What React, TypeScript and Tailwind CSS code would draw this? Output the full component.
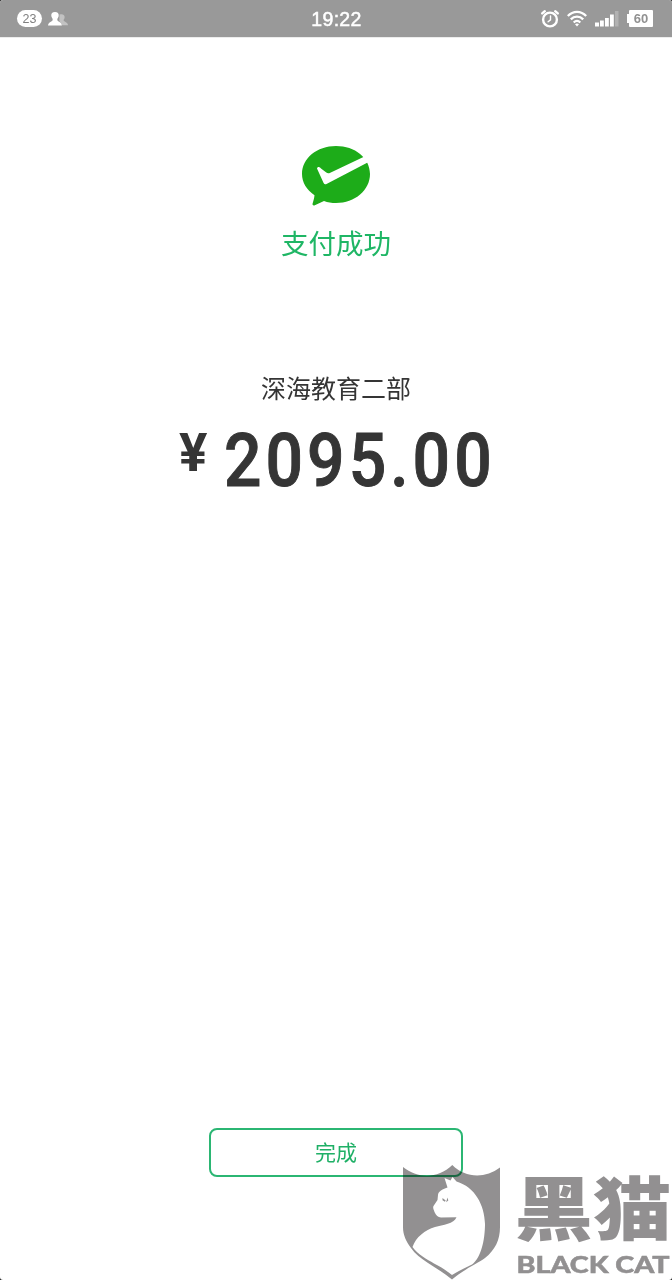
function AlarmIcon() {
  return (
    <svg width="20" height="20" viewBox="0 0 20 20" fill="none" stroke="white" strokeLinecap="round">
      <circle cx="10" cy="10.500" r="6.900" strokeWidth="2.400" />
      <path d="M10.500 7v3.800l-2.400 2" strokeWidth="1.400" />
      <path d="M2.200 4.400 4.800 2.200M17.800 4.400 15.200 2.200" strokeWidth="2.400" />
    </svg>
  );
}

function WifiIcon() {
  return (
    <svg width="20" height="17" viewBox="0 0 20 17" fill="none" stroke="white" strokeWidth="2.300">
      <path d="M.8 6C6 .4 14 .4 19.200 6" />
      <path d="M3.800 9.400c3.500-3.700 8.900-3.700 12.400 0" />
      <path d="M6.700 12.500c2-2 4.600-2 6.600 0" />
      <path d="M8 14.300c1.200-1 2.800-1 4 0l-2 2.200z" fill="white" stroke="none" />
    </svg>
  );
}

function SignalIcon() {
  return (
    <svg width="24" height="16" viewBox="0 0 24 16" fill="white">
      <rect x="0" y="11.500" width="4" height="4" />
      <rect x="5" y="9.500" width="3.800" height="6" />
      <rect x="10" y="7" width="3.800" height="8.500" />
      <rect x="15" y="3.500" width="3.800" height="12" />
      <rect x="20" y="0" width="3.500" height="15.500" opacity=".25" />
    </svg>
  );
}

function ContactsIcon() {
  return (
    <svg width="21" height="14" viewBox="0 0 21 14" fill="white">
      <path
        opacity=".4"
        d="M11.500 2.600c2.900-1.300 5.600.2 5.100 3.100-.3 1.400-1.200 1.800-.9 2.800.4 1.300 4 1.500 4.400 4.700h-6.200c-.5-2.400-2.600-3.200-2.600-4.700z"
      />
      <path d="M7 0c2.700 0 4 1.600 3.700 4-.2 1.700-1.500 2.300-1.400 3.800.1 2 4.200 2 4.600 5.600H0C.4 9.800 4.600 9.800 4.700 7.800 4.800 6.300 3.500 5.700 3.300 4 3 1.600 4.300 0 7 0z" />
    </svg>
  );
}

function StatusBar() {
  return (
    <header className="grid h-[38px] shrink-0 grid-cols-3 items-center border-b border-[#ececec] bg-[#999] pl-[17px] pr-[19px] text-white">
      <div className="flex items-center gap-[6px]">
        <span className="flex h-[17px] w-[25px] items-center justify-center rounded-full bg-white pt-px text-[12.500px] leading-none text-[#808080]">
          23
        </span>
        <ContactsIcon />
      </div>
      <span className="pl-[3px] pt-[3px] text-center text-[19.500px] leading-none tracking-[0.300px] [-webkit-text-stroke:0.500px_white]">
        19:22
      </span>
      <div className="flex items-center justify-end">
        <AlarmIcon />
        <span className="ml-[7px]"><WifiIcon /></span>
        <span className="ml-[8px]"><SignalIcon /></span>
        <div className="ml-[8px] flex items-center">
          <span className="h-[9px] w-[2px] bg-white" />
          <span className="flex h-[17px] w-[24px] items-center justify-center rounded-[1px] bg-white text-[13px] font-bold leading-none text-[#919191]">
            60
          </span>
        </div>
      </div>
    </header>
  );
}

function PayLogo() {
  return (
    <svg width="70" height="62" viewBox="0 0 70 62">
      <path
        fill="#1dac19"
        d="M35 1C16 1 1 13.200 1 29c0 8.500 4.500 15.500 12.500 21.200-.3 3-1.100 5.800-1.900 8.300-.4 1.500.8 2.400 2.200 1.700l9.200-4.300c3.800 1.500 7.500 2.100 12 2.100 19 0 34-12.900 34-29S54 1 35 1z"
      />
      <path
        fill="white"
        d="M16 23.400c.8-2.100 2.300-1.900 4 0l5.300 4.200c1.400 1 2.300 1 4 .1L64 11.200 69.500 16 25.500 38.900c-1.300.6-2.300.2-2.900-1z"
      />
    </svg>
  );
}

function Watermark() {
  return (
    <div className="pointer-events-none absolute bottom-0 right-0 mix-blend-multiply">
      <svg className="overflow-visible" width="272" height="118" viewBox="400 1162 272 118" fill="#929091">
        <path
          fillRule="evenodd"
          d="M403 1167C418 1179 438 1179 452.300 1165 465 1178 485 1179 500 1167.500V1227C500 1240 495 1250 485 1258 478 1263 463 1270 452 1279.500 444 1273 436 1268 428 1263 421 1258 415 1254 411 1248 406 1241 403 1235 403 1227z
             M444.500 1178 447.500 1187.500C442 1189 438 1192 438 1195L437.500 1200 433.500 1206C432.500 1208 434 1209.500 434.500 1212 436 1215 438 1217.500 441 1217.500L456.500 1217.300C454 1224 443 1225 435 1227 425 1230 416 1237 412.500 1247 418 1255 427 1259 434 1263.500 441 1267 447 1271 452 1275 458 1271 465 1268 472 1264.500 481 1258 485 1240 485 1224 484.500 1205 475 1187 456.500 1181.500L452.500 1177 450.500 1180.500z"
        />
        <path d="m442.500 1198 3.200 2.500-.8 1.200-2.400-1.500zM447.500 1197.500l.8 3-2.200 1.700z" />
        <text
          x="514.500"
          y="1234.500"
          fontFamily="'Noto Sans CJK SC', sans-serif"
          fontSize="69"
          fontWeight="900"
          textLength="157"
          lengthAdjust="spacingAndGlyphs"
        >
          黑猫
        </text>
        <text
          x="516.500"
          y="1272.500"
          fontFamily="Lato, sans-serif"
          fontSize="23"
          fontWeight="900"
          textLength="153"
          lengthAdjust="spacingAndGlyphs"
          stroke="#929091"
          strokeWidth=".5"
        >
          BLACK CAT
        </text>
      </svg>
    </div>
  );
}

export default function App() {
  return (
    <div className="h-[1280px] w-[672px] bg-[#222] font-['Liberation_Sans','Noto_Sans_CJK_SC',sans-serif]">
      <div className="relative flex h-full flex-col overflow-hidden rounded-[3px] bg-white">
        <StatusBar />
        <main className="flex flex-1 flex-col items-center">
          <div className="mt-[107px]">
            <PayLogo />
          </div>
          <h1 className="mt-[18px] text-[27.500px] leading-[40px] text-[#1fb665]">支付成功</h1>
          <p className="mt-[106px] text-[25px] leading-[36px] text-[#353535]">深海教育二部</p>
          <p className="mt-[9px] flex w-[314px] items-start font-['Roboto','Liberation_Sans',sans-serif] text-[#353535]">
            <span className="mt-[10px] w-[45px] text-[53px] font-bold leading-[54px]">¥</span>
            <span className="w-[269px] origin-left scale-x-[.88] text-[75px] font-medium leading-[88px] tracking-[4.600px] [-webkit-text-stroke:1px_#353535]">
              2095.00
            </span>
          </p>
          <button
            type="button"
            className="mb-[103px] mt-auto h-[49px] w-[254px] rounded-[8px] border-2 border-[#2bb673] text-[21px] leading-none text-[#1fb066]"
          >
            完成
          </button>
        </main>
        <Watermark />
      </div>
    </div>
  );
}
